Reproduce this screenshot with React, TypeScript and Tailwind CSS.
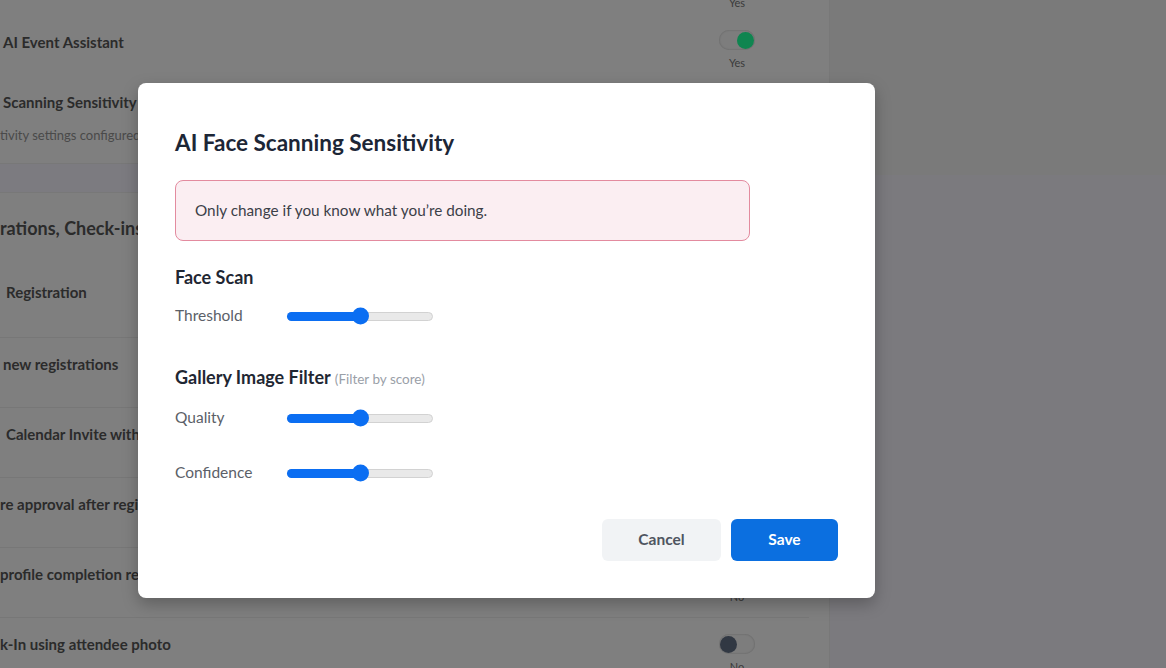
import type { ReactNode } from 'react';

const font = { fontFamily: 'Lato, "Noto Sans", sans-serif' };

function Toggle({ on, label }: { on: boolean; label: string }) {
    return (
        <div className='flex flex-col items-center w-[40px]'>
            <div className={`w-[36px] h-[20px] rounded-full bg-[#7d7d7d] shadow-[inset_0_0_2px_rgba(0,0,0,0.25)] flex items-center px-[1px] ${on ? 'justify-end' : 'justify-start'}`}>
                <div className={`w-[17px] h-[17px] rounded-full ${on ? 'bg-[#0f8550]' : 'bg-[#313843]'}`} />
            </div>
            <span className='text-[11px] leading-[12px] mt-[7px] text-[#3a3a3a]'>{label}</span>
        </div>
    );
}

function Row({ title, indent = 0, on = false, label = 'No' }: { title: string; indent?: number; on?: boolean; label?: string }) {
    return (
        <div className='h-[70px] flex justify-between pt-[16px] pr-[52px] border-t border-[#777777]'>
            <span className='text-[15px] leading-[20px] font-bold text-[#2b2b2b] whitespace-nowrap' style={{ paddingLeft: indent }}>{title}</span>
            <Toggle on={on} label={label} />
        </div>
    );
}

function Slider({ label, value }: { label: string; value: number }) {
    return (
        <div className='flex items-center h-[24px]'>
            <span className='w-[112px] text-[15.5px] text-[#5b6068]'>{label}</span>
            <div className='relative w-[146px] h-[9px] rounded-full bg-[#e9e9e9] border border-[#d2d2d2]'>
                <div className='rounded-full bg-[#0b6ef2] -m-[1px] h-[9px]' style={{ width: `${value}%` }} />
                <div className='absolute top-1/2 -translate-y-1/2 w-[17px] h-[17px] rounded-full bg-[#0b6ef2]' style={{ left: `calc(${value}% - 8px)` }} />
            </div>
        </div>
    );
}

function Section({ children }: { children: ReactNode }) {
    return <div className='text-[18px] leading-[24px] font-bold text-[#1f2733] whitespace-nowrap'>{children}</div>;
}

export default function App() {
    return (
        <div className='relative w-[1166px] h-[668px] overflow-hidden flex' style={font}>
            {/* Page behind the dialog (dimmed) */}
            <div className='w-[830px] h-full bg-[#7f7f7f] border-r border-[#787878] overflow-hidden flex flex-col'>
                <div className='h-[10px] shrink-0 pr-[72px] flex justify-end'>
                    <span className='-mt-[3px] w-[40px] text-center text-[11px] leading-[12px] text-[#3a3a3a]'>Yes</span>
                </div>
                <div className='h-[70px] shrink-0 flex justify-between items-start pr-[72px] pl-[3px] pt-[20px]'>
                    <span className='mt-[2px] text-[15px] leading-[20px] font-bold text-[#2b2b2b]'>AI Event Assistant</span>
                    <Toggle on label='Yes' />
                </div>
                <div className='h-[83px] shrink-0 pl-[3px] pt-[12px]'>
                    <div className='text-[15px] leading-[20px] font-bold text-[#2b2b2b] whitespace-nowrap'>Scanning Sensitivity</div>
                    <div className='mt-[14px] -ml-[3px] text-[13px] leading-[18px] text-[#4a4a4a] whitespace-nowrap'>tivity settings configured</div>
                </div>
                <div className='h-[30px] shrink-0 bg-[#7c7b80] border-y border-[#787878]' />
                <div className='h-[144px] shrink-0 pt-[23px]'>
                    <div className='text-[18px] leading-[24px] font-bold text-[#2b2b2b] whitespace-nowrap'>rations, Check-ins</div>
                    <div className='mt-[42px] pl-[6px] text-[15px] leading-[20px] font-bold text-[#2b2b2b]'>Registration</div>
                </div>
                <div className='mr-[20px] shrink-0'>
                    <Row title='new registrations' indent={3} />
                    <Row title='Calendar Invite with' indent={6} />
                    <Row title='re approval after registration' />
                    <Row title='profile completion required' />
                    <Row title='k-In using attendee photo' />
                </div>
            </div>
            <div className='flex-1 flex flex-col'>
                <div className='h-[175px] bg-[#7a7a7a]' />
                <div className='flex-1 bg-[#7b7a7e]' />
            </div>

            {/* Dialog */}
            <div className='absolute inset-0 pl-[138px] pt-[83px]'>
                <div className='w-[737px] rounded-[8px] bg-white shadow-[0_6px_16px_rgba(0,0,0,0.25)] px-[37px] pt-[46px] pb-[37px]'>
                    <h2 className='text-[22.5px] leading-[28px] font-bold text-[#1c2636]'>AI Face Scanning Sensitivity</h2>
                    <div className='mt-[23px] w-[575px] h-[61px] flex items-center px-[19px] rounded-[8px] bg-[#fbeef2] border border-[#e38b9f] text-[15.3px] text-[#3b4048]'>
                        Only change if you know what you’re doing.
                    </div>
                    <div className='mt-[24px]'>
                        <Section>Face Scan</Section>
                    </div>
                    <div className='mt-[15px]'>
                        <Slider label='Threshold' value={50} />
                    </div>
                    <div className='mt-[37px]'>
                        <Section>
                            Gallery Image Filter <span className='text-[13.5px] font-normal text-[#9aa0a8]'>(Filter by score)</span>
                        </Section>
                    </div>
                    <div className='mt-[15px]'>
                        <Slider label='Quality' value={50} />
                    </div>
                    <div className='mt-[31px]'>
                        <Slider label='Confidence' value={50} />
                    </div>
                    <div className='mt-[34px] flex justify-end gap-[10px]'>
                        <button className='w-[119px] h-[42px] rounded-[6px] bg-[#f1f3f5] text-[15.5px] font-bold text-[#4f5560]'>Cancel</button>
                        <button className='w-[107px] h-[42px] rounded-[6px] bg-[#0b6fe0] text-[15.5px] font-bold text-white'>Save</button>
                    </div>
                </div>
            </div>
        </div>
    );
}
